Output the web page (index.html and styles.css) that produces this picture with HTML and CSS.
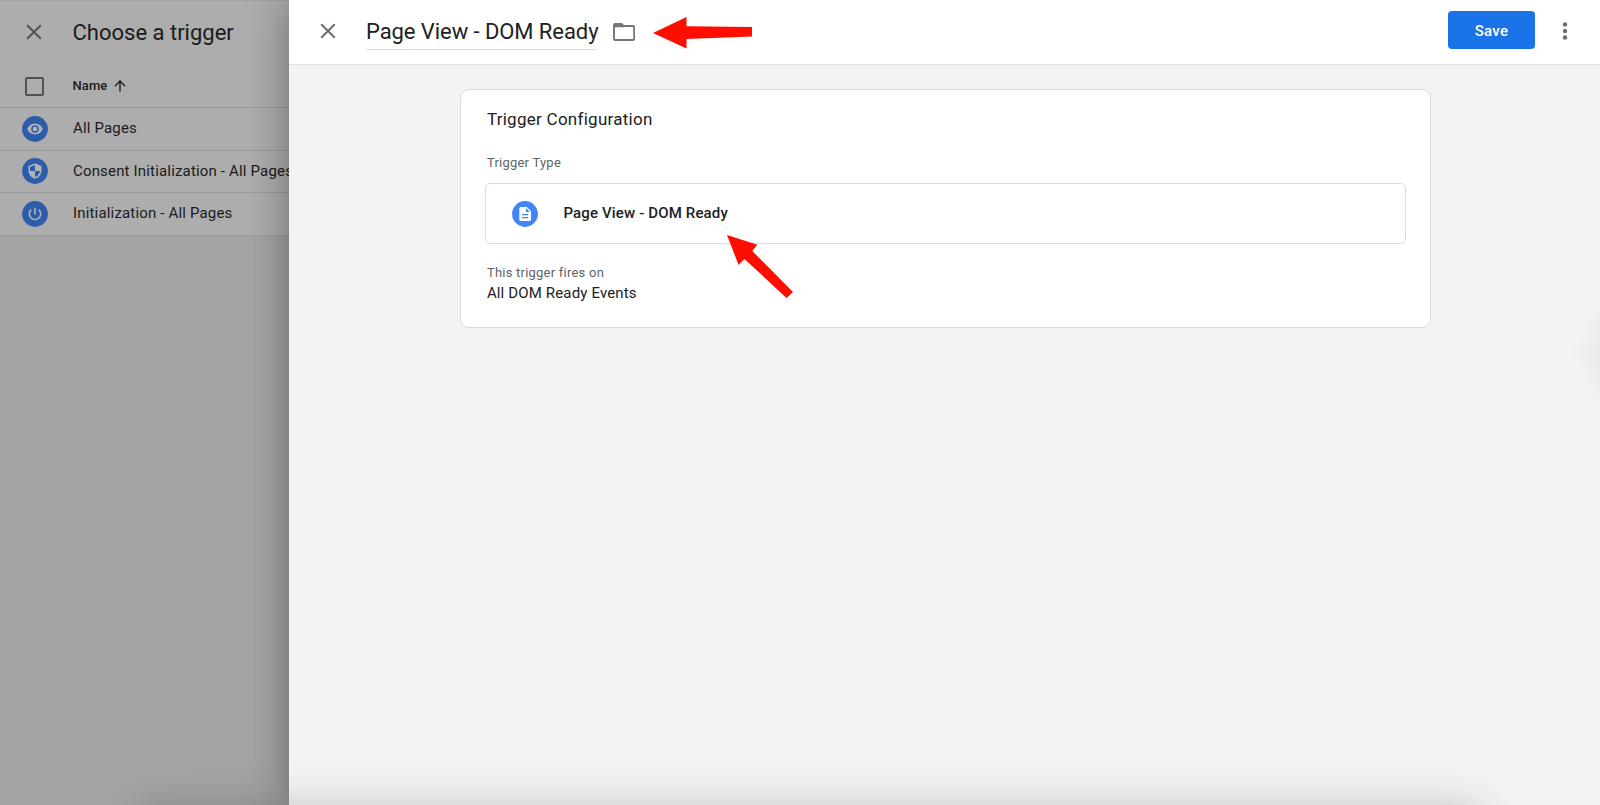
FILE: index.html
```html
<!DOCTYPE html>
<html lang="en">
<head>
    <meta charset="UTF-8">
    <meta name="viewport" content="width=device-width, initial-scale=1.0">
    <title>Trigger Configuration</title>
    <link rel="stylesheet" href="styles.css">
</head>
<body>
    <div class="app">
        <!-- Trigger list behind the panel -->
        <aside class="trigger-list">
            <div class="list-top">
                <div class="list-header">
                    <svg class="close-icon" viewBox="0 0 16 16"><path d="M1.2 1.2l13.6 13.6M14.8 1.2L1.2 14.8"/></svg>
                    <h2>Choose a trigger</h2>
                </div>
                <div class="list-columns">
                    <span class="checkbox"></span>
                    <span class="column-name">Name</span>
                    <svg class="sort-icon" viewBox="0 0 12 12"><path d="M6 11.5V1M1 6l5-5 5 5"/></svg>
                </div>
                <div class="list-row">
                    <svg class="row-icon" viewBox="0 0 26 26">
                        <circle class="disc" cx="13" cy="13" r="12.9"/>
                        <path class="glyph" d="M13 7.6C9.5 7.6 6.5 9.7 5.2 13c1.3 3.3 4.3 5.4 7.8 5.4s6.5-2.1 7.8-5.4c-1.3-3.3-4.3-5.4-7.8-5.4z"/>
                        <circle class="disc" cx="13" cy="13" r="3.8"/>
                        <circle class="glyph" cx="13" cy="13" r="2.3"/>
                    </svg>
                    <span>All Pages</span>
                </div>
                <div class="list-row">
                    <svg class="row-icon" viewBox="0 0 26 26">
                        <circle class="disc" cx="13" cy="13" r="12.9"/>
                        <path class="glyph" d="M13 5.2L6.5 8.1v4.4c0 4 2.8 7.3 6.5 8.3 3.7-1 6.5-4.3 6.5-8.3V8.1z"/>
                        <path class="disc" d="M13 6.9v6H8V9.1zM13 12.9h5c-.3 2.9-2.3 5.4-5 6.3z"/>
                    </svg>
                    <span>Consent Initialization - All Pages</span>
                </div>
                <div class="list-row">
                    <svg class="row-icon" viewBox="0 0 26 26">
                        <circle class="disc" cx="13" cy="13" r="12.9"/>
                        <path class="power" d="M13 6.7v6.9M9.2 8.6a5.7 5.7 0 1 0 7.6 0"/>
                    </svg>
                    <span>Initialization - All Pages</span>
                </div>
            </div>
        </aside>

        <!-- Trigger editor panel -->
        <main class="panel">
            <header class="panel-header">
                <svg class="close-icon" viewBox="0 0 16 16"><path d="M1.2 1.2l13.6 13.6M14.8 1.2L1.2 14.8"/></svg>
                <h1 class="trigger-name">Page View - DOM Ready</h1>
                <svg class="folder-icon" viewBox="0 0 22 18"><path d="M2.2 1h6.3l2 2H20c.7 0 1.2.5 1.2 1.2v11.6c0 .7-.5 1.2-1.2 1.2H2.2C1.5 17 1 16.5 1 15.8V2.2C1 1.5 1.5 1 2.2 1z"/><path class="tab" d="M1.5 1h7L11 4.2H1.5z"/></svg>
                <button class="save-btn">Save</button>
                <svg class="more-icon" viewBox="0 0 6 18"><circle cx="3" cy="2.5" r="2.2"/><circle cx="3" cy="9" r="2.2"/><circle cx="3" cy="15.5" r="2.2"/></svg>
            </header>

            <section class="card">
                <h2>Trigger Configuration</h2>
                <p class="label type-label">Trigger Type</p>
                <div class="type-box">
                    <svg class="row-icon" viewBox="0 0 26 26">
                        <circle class="disc" cx="13" cy="13" r="12.9"/>
                        <path class="glyph" d="M8.8 6h5.9l4.3 4.3v8.2c0 .8-.7 1.5-1.5 1.5H8.8c-.8 0-1.5-.7-1.5-1.5v-11c0-.8.7-1.5 1.5-1.5z"/>
                        <path class="disc" d="M14 7.1v3.8h3.8zM10 13h6.2v1.3H10zM10 16h6.2v1.3H10z"/>
                    </svg>
                    <span>Page View - DOM Ready</span>
                </div>
                <p class="label">This trigger fires on</p>
                <p class="value">All DOM Ready Events</p>
            </section>
        </main>

        <!-- Pointer arrows -->
        <svg class="arrow arrow-name" viewBox="0 0 100 32"><path d="M0 16L33.500 0v9.300L99 10v9.500L33.500 22v9.500z"/></svg>
        <svg class="arrow arrow-type" viewBox="0 0 68 66"><path d="M0 0l30.300 9.800-5.100 6.200L66 57l-6.500 6L17.500 24l-6 5.800z"/></svg>
        <div class="edge-shadow bottom-shadow"></div>
        <div class="edge-shadow side-shadow"></div>
    </div>
</body>
</html>
```
FILE: styles.css
```css
body {
    margin: 0;
    font-family: Roboto, Arial, sans-serif;
    color: #202124;
}

h1, h2, p {
    margin: 0;
    font-weight: 400;
}

svg {
    display: block;
    flex: none;
}

.app {
    position: relative;
    display: flex;
    height: 805px;
    overflow: hidden;
}

/* Trigger list */
.trigger-list {
    width: 289px;
    flex: none;
    background: #a3a5a3;
    color: #1a1b1b;
    white-space: nowrap;
}

.list-top {
    background: #adadad;
    border-top: 1px solid #a0a2a1;
}

.list-header {
    display: flex;
    align-items: center;
    height: 64px;
    padding-left: 26px;
}

    .list-header h2 {
        margin: 0 0 0 30.5px;
        font-size: 22px;
        line-height: 26px;
    }

.close-icon {
    width: 16px;
    height: 16px;
    margin-top: -3px;
    fill: none;
    stroke: #6b6d70;
    stroke-width: 2;
}

.trigger-list .close-icon {
    stroke: #515253;
}

.list-columns {
    display: flex;
    align-items: center;
    height: 41px;
    padding: 0 0 1px 25px;
    border-bottom: 1px solid #999a9b;
}

.checkbox {
    box-sizing: border-box;
    width: 19px;
    height: 19px;
    margin-top: 2px;
    border: 2px solid #505152;
    border-radius: 2px;
}

.column-name {
    margin-left: 28.5px;
    font-size: 13px;
    font-weight: 500;
    letter-spacing: 0.1px;
}

.sort-icon {
    width: 12px;
    height: 12px;
    margin-left: 6.5px;
    fill: none;
    stroke: #1a1b1b;
    stroke-width: 1.4;
}

.list-row {
    display: flex;
    align-items: center;
    box-sizing: border-box;
    height: 42.5px;
    padding-left: 21.5px;
    border-bottom: 1px solid #999a9b;
    font-size: 15px;
    letter-spacing: 0.17px;
}

    .list-row span {
        margin: -1px 0 0 25.5px;
    }

.row-icon {
    width: 26px;
    height: 26px;
}

.disc {
    fill: #4285f4;
}

.glyph {
    fill: #fff;
}

.list-row .disc {
    fill: #2d5da8;
}

.list-row .glyph {
    fill: #b1b4b9;
}

.power {
    fill: none;
    stroke: #b1b4b9;
    stroke-width: 1.6;
}

/* Panel */
.panel {
    position: relative;
    flex: 1;
    background: #f1f3f4;
    box-shadow: 0 0 40px rgba(0, 0, 0, 0.38);
}

.panel-header {
    display: flex;
    align-items: center;
    height: 64px;
    padding: 0 32.5px 0 30.5px;
    background: #fff;
    border-bottom: 1px solid #dfe1e4;
}

.trigger-name {
    box-sizing: border-box;
    width: 232px;
    height: 34px;
    margin: 2px 0 0 30.5px;
    border-bottom: 1px solid #dadce0;
    font-size: 22px;
    line-height: 32px;
    letter-spacing: -0.07px;
    white-space: nowrap;
}

.folder-icon {
    width: 22px;
    height: 18px;
    margin-left: 14.5px;
    margin-top: -1px;
    fill: none;
    stroke: #757575;
    stroke-width: 1.9;
}

    .folder-icon .tab {
        fill: #757575;
        stroke: none;
    }

.save-btn {
    width: 87px;
    height: 38px;
    margin: -4px 26.5px 0 auto;
    padding: 2px 0 0;
    border: none;
    border-radius: 4px;
    background: #1a73e8;
    color: #fff;
    font-family: Roboto, Arial, sans-serif;
    font-size: 15px;
    font-weight: 500;
    letter-spacing: 0.3px;
}

.more-icon {
    width: 6px;
    height: 18px;
    margin-top: -3px;
    fill: #6e6e6e;
}

.card {
    box-sizing: border-box;
    width: 971px;
    height: 239px;
    margin: 24px 0 0 171.4px;
    padding: 18px 24.6px 18px 24px;
    background: #fff;
    border: 1px solid #dadce0;
    border-radius: 9px;
}

    .card h2 {
        font-size: 17px;
        line-height: 22px;
        letter-spacing: 0.27px;
        padding-left: 1.5px;
    }

.label {
    padding-left: 1.5px;
    color: #5f6368;
    font-size: 13px;
    line-height: 18px;
    letter-spacing: 0.23px;
}

.type-label {
    margin-top: 24px;
}

.type-box {
    display: flex;
    align-items: center;
    box-sizing: border-box;
    height: 61px;
    margin: 11px 0 20px;
    padding-left: 25.5px;
    border: 1px solid #dadce0;
    border-radius: 5px;
    font-size: 15px;
    font-weight: 500;
    letter-spacing: 0.15px;
}

    .type-box span {
        margin: -2px 0 0 25.5px;
    }

.value {
    padding-left: 1.5px;
    margin-top: 1px;
    font-size: 15px;
    line-height: 20px;
    letter-spacing: 0.15px;
}

/* Arrows and shadows lying over the page */
.arrow {
    position: absolute;
    fill: #ff0d00;
}

.arrow-name {
    left: 652.5px;
    top: 17px;
    width: 100px;
    height: 32px;
}

.arrow-type {
    left: 727px;
    top: 235px;
    width: 68px;
    height: 66px;
}

.edge-shadow {
    position: absolute;
}

.bottom-shadow {
    left: 140px;
    top: 809px;
    width: 1340px;
    height: 60px;
    box-shadow: 0 0 44px rgba(0, 0, 0, 0.22);
}

.side-shadow {
    left: 1606px;
    top: 318px;
    width: 60px;
    height: 70px;
    border-radius: 30px;
    box-shadow: 0 0 40px rgba(0, 0, 0, 0.12);
}
```
